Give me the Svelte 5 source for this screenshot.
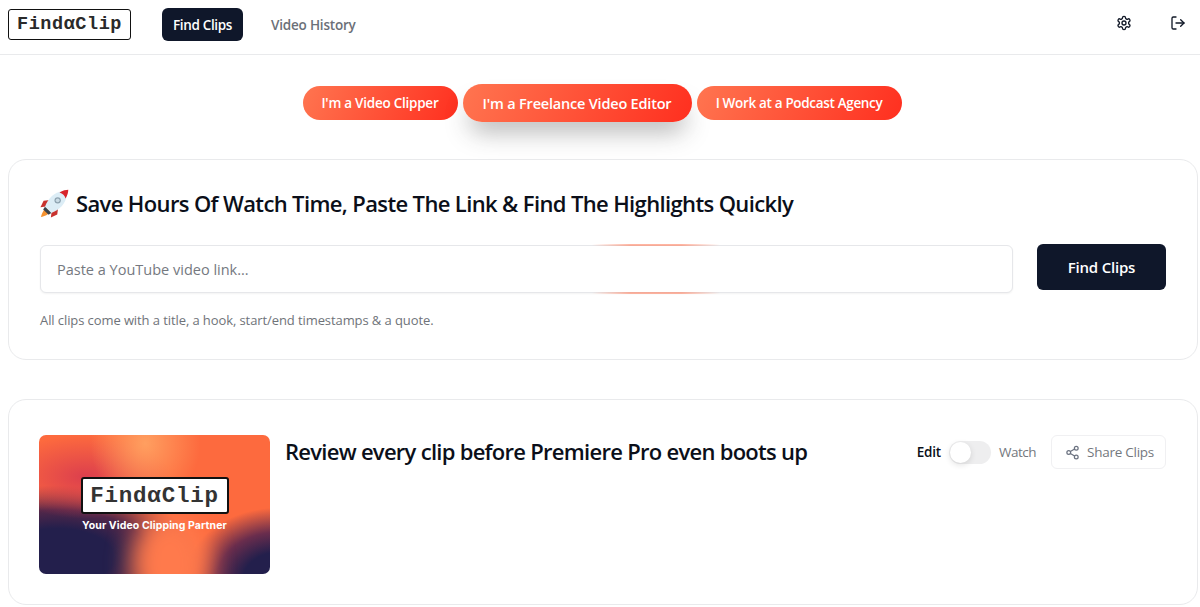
<script>
  const tabs = [
    { label: "I'm a Video Clipper", kind: "one" },
    { label: "I'm a Freelance Video Editor", kind: "big" },
    { label: "I Work at a Podcast Agency", kind: "three" }
  ];
</script>

<div class="page">
  <header class="topbar">
    <div class="brand">
      <div class="logo">FindαClip</div>
      <nav class="nav">
        <span class="nav-item active">Find Clips</span>
        <span class="nav-item">Video History</span>
      </nav>
    </div>
    <div class="actions">
      <svg class="icon" viewBox="0 0 24 24" fill="none" stroke="#111827" stroke-width="2" stroke-linecap="round" stroke-linejoin="round">
        <path d="M12.22 2h-.44a2 2 0 0 0-2 2v.18a2 2 0 0 1-1 1.73l-.43.25a2 2 0 0 1-2 0l-.15-.08a2 2 0 0 0-2.73.73l-.22.38a2 2 0 0 0 .73 2.73l.15.1a2 2 0 0 1 1 1.72v.51a2 2 0 0 1-1 1.74l-.15.09a2 2 0 0 0-.73 2.73l.22.38a2 2 0 0 0 2.73.73l.15-.08a2 2 0 0 1 2 0l.43.25a2 2 0 0 1 1 1.73V20a2 2 0 0 0 2 2h.44a2 2 0 0 0 2-2v-.18a2 2 0 0 1 1-1.73l.43-.25a2 2 0 0 1 2 0l.15.08a2 2 0 0 0 2.73-.73l.22-.39a2 2 0 0 0-.73-2.73l-.15-.08a2 2 0 0 1-1-1.74v-.5a2 2 0 0 1 1-1.74l.15-.09a2 2 0 0 0 .73-2.73l-.22-.38a2 2 0 0 0-2.73-.73l-.15.08a2 2 0 0 1-2 0l-.43-.25a2 2 0 0 1-1-1.73V4a2 2 0 0 0-2-2z"/>
        <circle cx="12" cy="12" r="3"/>
      </svg>
      <svg class="icon" viewBox="0 0 24 24" fill="none" stroke="#111827" stroke-width="2" stroke-linecap="round" stroke-linejoin="round">
        <path d="M9 21H5a2 2 0 0 1-2-2V5a2 2 0 0 1 2-2h4"/>
        <path d="m16 17 5-5-5-5"/>
        <path d="M21 12H9"/>
      </svg>
    </div>
  </header>

  <div class="tabs">
    {#each tabs as tab}
      <button class="tab {tab.kind}">{tab.label}</button>
    {/each}
  </div>

  <section class="card search">
    <h1>
      <svg class="rocket" viewBox="0 0 32 32">
        <path d="M11 12 4 13l-3.500 7 8-1z" fill="#c8322e"/>
        <path d="M20 21l-1 7-7 3.500 1-8z" fill="#c8322e"/>
        <path d="M7 21c-3 1.500-5 6-6 10 4-1 8.500-3 10-6z" fill="#f59331"/>
        <path d="M5.500 19.500 C9 10 16 3.500 25 2.500 L29.500 7 C28.500 16 22 23 12.500 26.500z" fill="#dcedf6"/>
        <path d="M5.500 19.500 l7 7 -3 2 -6-6z" fill="#39434d"/>
        <path d="M21.500 3.800 C25 1.500 29 .8 31.200 .8 C31.200 3 30.500 7 28.200 10.500 C27.500 7.500 25 4.800 21.500 3.800z" fill="#d8232a"/>
        <circle cx="19.500" cy="12.500" r="3.500" fill="#8ea3b0"/>
        <circle cx="19.500" cy="12.500" r="2.100" fill="#c9dbe5"/>
      </svg>
      <span>Save Hours Of Watch Time, Paste The Link &amp; Find The Highlights Quickly</span>
    </h1>
    <div class="search-row">
      <div class="input-wrap">
        <input placeholder="Paste a YouTube video link..." />
        <span class="glow top"></span>
        <span class="glow bottom"></span>
      </div>
      <button class="find">Find Clips</button>
    </div>
    <p class="hint">All clips come with a title, a hook, start/end timestamps &amp; a quote.</p>
  </section>

  <section class="card result">
    <div class="thumb">
      <div class="thumb-logo">FindαClip</div>
      <div class="thumb-tag">Your Video Clipping Partner</div>
    </div>
    <h2>Review every clip before Premiere Pro even boots up</h2>
    <div class="controls">
      <span class="edit">Edit</span>
      <span class="switch"><span class="knob"></span></span>
      <span class="watch">Watch</span>
      <button class="share">
        <svg viewBox="0 0 24 24" fill="none" stroke="#6b7280" stroke-width="2" stroke-linecap="round" stroke-linejoin="round">
          <circle cx="18" cy="5" r="3"/><circle cx="6" cy="12" r="3"/><circle cx="18" cy="19" r="3"/>
          <path d="m8.59 13.51 6.83 3.98"/><path d="m15.41 6.51-6.82 3.98"/>
        </svg>
        Share Clips
      </button>
    </div>
  </section>
</div>

<style>
  :global(body) {
    margin: 0;
    background: #fff;
    overflow: hidden;
  }
  .page {
    font-family: "Open Sans", "Noto Sans", sans-serif;
    color: #0b0f19;
    width: 1200px;
    height: 607px;
    overflow: hidden;
  }
  .topbar {
    box-sizing: border-box;
    height: 55px;
    border-bottom: 1px solid #e9eaec;
    display: flex;
    align-items: center;
    justify-content: space-between;
    padding: 0 14px 6px 8px;
  }
  .brand {
    display: flex;
    align-items: center;
    gap: 31px;
  }
  .logo {
    width: 123px;
    height: 31px;
    box-sizing: border-box;
    border: 1px solid #111;
    border-radius: 3px;
    display: flex;
    align-items: center;
    justify-content: center;
    font-family: "Liberation Mono", monospace;
    font-weight: 700;
    font-size: 18.5px;
    letter-spacing: 0.55px;
    color: #2a2a2a;
  }
  .nav {
    display: flex;
    align-items: center;
    gap: 28px;
  }
  .nav-item {
    font-size: 13.5px;
    font-weight: 600;
    letter-spacing: -0.2px;
    color: #6b7078;
    height: 33px;
    line-height: 34px;
  }
  .nav-item.active {
    box-sizing: border-box;
    width: 81px;
    text-align: center;
    background: #0f172a;
    color: #fff;
    border-radius: 6px;
    letter-spacing: -0.35px;
  }
  .actions {
    display: flex;
    align-items: center;
    gap: 38px;
    margin-bottom: 2px;
  }
  .icon {
    width: 16px;
    height: 16px;
  }
  .tabs {
    display: flex;
    justify-content: center;
    align-items: center;
    gap: 5px;
    margin: 28px 0 0 4px;
    height: 40px;
  }
  .tab {
    border: 0;
    font-family: inherit;
    font-weight: 600;
    font-size: 13.5px;
    color: #fff;
    height: 34px;
    width: 155px;
    border-radius: 17px;
    background: linear-gradient(115deg, #ff7550, #ff2f1f);
    padding: 0;
  }
  .tab.one {
    letter-spacing: -0.25px;
  }
  .tab.three {
    width: 205px;
    letter-spacing: -0.33px;
  }
  .tab.big {
    height: 38px;
    width: 229px;
    border-radius: 19px;
    font-size: 14.5px;
    letter-spacing: -0.2px;
    box-shadow: 0 16px 24px -6px rgba(50, 50, 50, 0.35);
  }
  .card {
    box-sizing: border-box;
    margin-left: 8px;
    width: 1190px;
    border: 1px solid #e9eaec;
    border-radius: 18px;
    background: #fff;
  }
  .search {
    margin-top: 36px;
    height: 201px;
    padding: 27px 31px 0 31px;
  }
  h1 {
    margin: 0;
    display: flex;
    align-items: center;
    gap: 7px;
    font-size: 22px;
    font-weight: 570;
    line-height: 32px;
    letter-spacing: -0.63px;
    color: #0b0f19;
  }
  .rocket {
    width: 29px;
    height: 29px;
  }
  .search-row {
    display: flex;
    align-items: flex-start;
    gap: 24px;
    margin-top: 25px;
  }
  .input-wrap {
    position: relative;
    width: 973px;
    height: 48px;
    margin-top: 1px;
  }
  input {
    box-sizing: border-box;
    width: 100%;
    height: 100%;
    border: 1px solid #e6e7ea;
    border-radius: 6px;
    padding: 0 16px;
    font-family: inherit;
    font-size: 14.5px;
    outline: none;
    box-shadow: 0 1px 2px rgba(0, 0, 0, 0.05);
  }
  input::placeholder {
    color: #75797f;
    opacity: 1;
  }
  .glow {
    position: absolute;
    left: 552px;
    width: 128px;
    height: 2px;
    background: linear-gradient(90deg, rgba(255, 120, 85, 0), rgba(255, 120, 85, 0.55) 30%, rgba(255, 120, 85, 0.55) 70%, rgba(255, 120, 85, 0));
  }
  .glow.top { top: -1px; }
  .glow.bottom { bottom: -1px; }
  .find {
    width: 129px;
    height: 46px;
    border: 0;
    border-radius: 6px;
    background: #0f172a;
    color: #fff;
    font-family: inherit;
    font-size: 15px;
    font-weight: 600;
    letter-spacing: -0.2px;
  }
  .hint {
    margin: 18px 0 0;
    font-size: 13px;
    line-height: 18px;
    letter-spacing: -0.09px;
    color: #6f7379;
  }
  .result {
    margin-top: 39px;
    height: 206px;
    display: flex;
    align-items: flex-start;
    padding: 35px 31px 0 30px;
  }
  .thumb {
    width: 231px;
    height: 139px;
    flex: none;
    position: relative;
    overflow: hidden;
    border-radius: 7px;
    display: flex;
    flex-direction: column;
    align-items: center;
    justify-content: center;
    background:
      radial-gradient(55px 62px at 46% 6%, #ff9f60 0%, rgba(255, 159, 96, 0) 100%),
      radial-gradient(85px 42px at 20% 30%, #dc3f4d 0%, rgba(220, 63, 77, 0) 100%),
      radial-gradient(140px 72px at 8% 88%, #231f4c 40%, #532749 66%, rgba(190, 60, 70, 0) 100%),
      radial-gradient(95px 72px at 104% 104%, #231f4c 38%, #6a2d4d 66%, rgba(190, 60, 70, 0) 100%),
      radial-gradient(40px 22px at 0% 100%, #6b5a7a 0%, rgba(107, 90, 122, 0) 100%),
      #fd6a3e;
  }
  .thumb::before {
    content: "";
    position: absolute;
    left: 92px;
    top: 78px;
    width: 78px;
    height: 100px;
    border-radius: 50%;
    background: #ff7a4c;
    filter: blur(12px);
  }
  .thumb-logo {
    position: relative;
    box-sizing: border-box;
    width: 148px;
    height: 37px;
    background: #fff;
    border: 2px solid #111;
    border-radius: 3px;
    display: flex;
    align-items: center;
    justify-content: center;
    font-family: "Liberation Mono", monospace;
    font-weight: 700;
    font-size: 22.5px;
    letter-spacing: 0.8px;
    color: #333;
  }
  .thumb-tag {
    position: relative;
    margin-top: 5px;
    line-height: 13px;
    font-family: "Inter", sans-serif;
    font-size: 10.5px;
    font-weight: 700;
    color: #fff;
    white-space: nowrap;
    letter-spacing: 0.1px;
  }
  h2 {
    margin: 0 0 0 15px;
    font-size: 22px;
    font-weight: 570;
    line-height: 32px;
    letter-spacing: -0.72px;
    flex: 1;
    white-space: nowrap;
    color: #0b0f19;
  }
  .controls {
    display: flex;
    align-items: center;
    height: 34px;
    flex: none;
    font-size: 13.5px;
  }
  .edit {
    font-weight: 600;
    letter-spacing: -0.2px;
    margin-right: 8px;
  }
  .switch {
    width: 42px;
    height: 23px;
    border-radius: 12px;
    background: #eeeeef;
    display: block;
    position: relative;
    margin-right: 8px;
  }
  .knob {
    position: absolute;
    left: 1px;
    top: 1px;
    width: 21px;
    height: 21px;
    border-radius: 50%;
    background: #fff;
    box-shadow: 0 2px 6px rgba(0, 0, 0, 0.12);
  }
  .watch {
    color: #74787e;
    margin-right: 15px;
    letter-spacing: -0.5px;
  }
  .share {
    display: flex;
    align-items: center;
    gap: 7px;
    height: 34px;
    width: 115px;
    box-sizing: border-box;
    padding: 0 0 0 13px;
    background: #fff;
    border: 1px solid #f0f0f2;
    border-radius: 6px;
    color: #74787e;
    font-family: inherit;
    font-size: 13.5px;
    letter-spacing: -0.25px;
    white-space: nowrap;
  }
  .share svg {
    width: 15px;
    height: 15px;
    flex: none;
  }
</style>
